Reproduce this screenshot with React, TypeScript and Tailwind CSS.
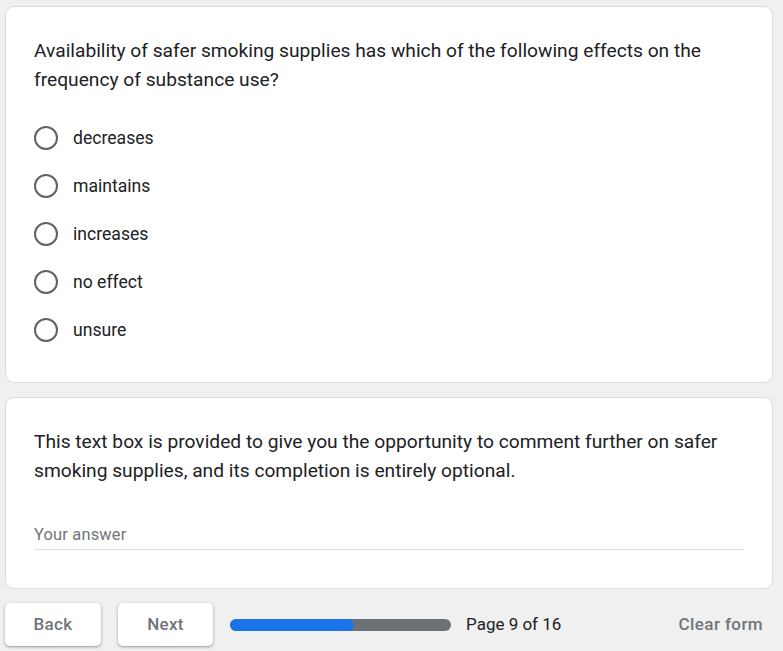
import React from 'react'

const OPTIONS = ['decreases', 'maintains', 'increases', 'no effect', 'unsure']

export default function App() {
  return (
    <div className="min-h-screen w-full bg-[#f0f0f0] font-['Roboto',sans-serif] text-[#202124]">
      <div className="flex flex-col pt-[6px] pl-[5px] pr-[10px]">
        {/* question card */}
        <div className="bg-white rounded-[9px] border border-[#dadce0] px-[28px] pt-[29px] pb-[28px]">
          <p className="text-[19.2px] leading-[29px]">
            Availability of safer smoking supplies has which of the following effects on the frequency of substance use?
          </p>
          <div className="flex flex-col mt-[20px]">
            {OPTIONS.map((opt) => (
              <label key={opt} className="flex items-center h-[48px]">
                <span className="w-[24px] h-[24px] rounded-full border-2 border-[#5f6368] shrink-0" />
                <span className="ml-[15px] text-[17.6px] leading-[24px]">{opt}</span>
              </label>
            ))}
          </div>
        </div>

        {/* comment card */}
        <div className="bg-white rounded-[9px] border border-[#dadce0] mt-[14px] px-[28px] pt-[29px] pb-[38px]">
          <p className="text-[19.2px] leading-[29px]">
            This text box is provided to give you the opportunity to comment further on safer smoking supplies, and its completion is entirely optional.
          </p>
          <div className="mt-[38px] border-b border-[#dadce0] pb-[2px]">
            <span className="text-[16.4px] leading-[22px] text-[#70757a] tracking-[0.2px]">Your answer</span>
          </div>
        </div>

        {/* footer */}
        <div className="flex items-center mt-[14px] h-[43px]">
          <button className="w-[96px] h-[43px] bg-white rounded-[5px] shadow-[0_1px_2px_rgba(60,64,67,0.35),0_1px_3px_1px_rgba(60,64,67,0.12)] text-[17px] font-medium text-[#70757a] tracking-[0.3px]">
            Back
          </button>
          <button className="ml-[17px] w-[95px] h-[43px] bg-white rounded-[5px] shadow-[0_1px_2px_rgba(60,64,67,0.35),0_1px_3px_1px_rgba(60,64,67,0.12)] text-[17px] font-medium text-[#70757a] tracking-[0.3px]">
            Next
          </button>
          <div className="ml-[17px] w-[221px] h-[12px] rounded-full bg-[#6d7074] overflow-hidden flex">
            <div className="w-[124px] h-full rounded-full bg-[#1a73e8]" />
          </div>
          <span className="ml-[15px] text-[17px] text-[#202124]">Page 9 of 16</span>
          <span className="ml-auto mr-[10px] text-[17px] font-medium text-[#70757a] tracking-[0.4px]">Clear form</span>
        </div>
      </div>
    </div>
  )
}
